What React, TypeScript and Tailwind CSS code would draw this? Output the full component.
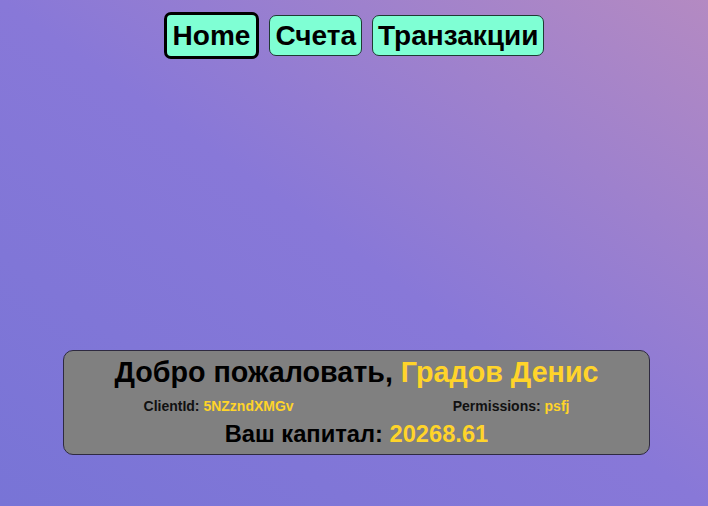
import React from 'react';

const tabs = ['Home', 'Счета', 'Транзакции'];

export default function App() {
  const active = 'Home';

  return (
    <div
      className="min-h-screen w-full bg-[linear-gradient(to_top_right,#7874d6,#8878d8_50%,#b48ac2)] pt-[12px]"
      style={{ fontFamily: '"Liberation Sans", Arial, sans-serif' }}
    >
      {/* навигация */}
      <nav className="flex items-center justify-center gap-[10px]">
        {tabs.map((t) =>
          t === active ? (
            <button
              key={t}
              className="h-[47px] rounded-[7px] border-[3px] border-black bg-[#7fffd4] px-[6px] text-[28px] font-bold leading-none text-black"
            >
              {t}
            </button>
          ) : (
            <button
              key={t}
              className="h-[41px] rounded-[7px] border border-[#1f3a33] bg-[#7fffd4] px-[5px] text-[28px] font-bold leading-none text-black"
            >
              {t}
            </button>
          ),
        )}
      </nav>

      {/* карточка пользователя */}
      <div className="ml-[63px] mt-[291px] flex w-[587px] flex-col items-center rounded-[10px] border border-[#2e2a40] bg-[#808080] pb-[6px] pt-[5px]">
        <h1 className="text-[28.7px] font-bold leading-[32px] text-black">
          Добро пожаловать, <span className="text-[#ffd42a]">Градов Денис</span>
        </h1>
        <div className="mt-[10px] flex w-full justify-around text-[14px] font-bold leading-[16px] text-[#111]">
          <span>
            ClientId: <span className="text-[#ffd42a]">5NZzndXMGv</span>
          </span>
          <span>
            Permissions: <span className="text-[#ffd42a]">psfj</span>
          </span>
        </div>
        <div className="mt-[6px] text-[23.7px] font-bold leading-[28px] text-black">
          Ваш капитал: <span className="text-[#ffd42a]">20268.61</span>
        </div>
      </div>
    </div>
  );
}
